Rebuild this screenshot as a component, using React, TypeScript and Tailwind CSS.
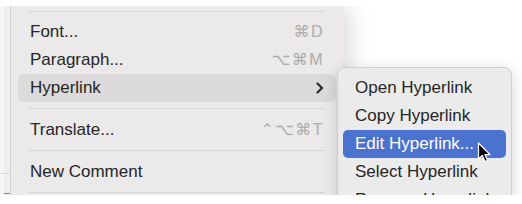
import React from "react";

const font = { fontFamily: '"Liberation Sans", "DejaVu Sans", Arial, sans-serif' };

function Separator() {
  return (
    <div className="pt-[6px] pb-[7px]">
      <div className="mx-[11px] h-px bg-[#d6d4d4]" />
    </div>
  );
}

function Item({
  label,
  shortcut,
  active,
  submenu,
}: {
  label: string;
  shortcut?: string;
  active?: boolean;
  submenu?: boolean;
}) {
  return (
    <div
      className={`flex h-[28px] items-center justify-between rounded-[5px] pl-[12px] pr-[12px] ${
        active ? "bg-[#dcdada]" : ""
      }`}
    >
      <span className="text-[17px] text-[#262626]">{label}</span>
      {shortcut ? (
        <span className="text-[16px] tracking-[1.5px] text-[#adabab]">{shortcut}</span>
      ) : null}
      {submenu ? (
        <svg width="8" height="12" viewBox="0 0 8 12">
          <path d="M1.5 1.5 L6 6 L1.5 10.5" fill="none" stroke="#2a2a2a" strokeWidth="2.2" strokeLinecap="round" strokeLinejoin="round" />
        </svg>
      ) : null}
    </div>
  );
}

function SubItem({ label, active }: { label: string; active?: boolean }) {
  return (
    <div
      className={`flex h-[28px] items-center rounded-[5px] px-[12px] text-[17px] ${
        active ? "bg-[#4b72cf] text-white" : "text-[#262626]"
      }`}
    >
      {label}
    </div>
  );
}

export default function App() {
  return (
    <div className="relative h-[204px] w-[522px] overflow-hidden bg-white" style={font}>
      <div className="h-[6px]" />
      <div className="relative flex h-[189px] overflow-hidden">
        <div className="relative flex w-[11px] shrink-0 border-r border-[#d3d3d3] bg-[#efefef]">
          <div className="w-[4px] bg-[#f6f6f6]" />
          <div className="absolute left-0 top-[167px] h-px w-[10px] bg-[#d8d8d8]" />
          <div className="absolute left-[4px] top-[187px] h-px w-[6px] bg-[#8a8a8a]" />
        </div>
        <div className="w-[332px] shrink-0 bg-[#ebe9e9] px-[7px] shadow-[8px_0_20px_rgba(0,0,0,0.13)]">
          <div className="pt-[5px] pb-[6px]">
            <div className="mx-[11px] h-px bg-[#d6d4d4]" />
          </div>
          <Item label="Font..." shortcut="⌘D" />
          <Item label="Paragraph..." shortcut="⌥⌘M" />
          <Item label="Hyperlink" active submenu />
          <Separator />
          <Item label="Translate..." shortcut="⌃⌥⌘T" />
          <Separator />
          <Item label="New Comment" />
          <Separator />
        </div>

        <div className="absolute left-[337px] top-[61px] w-[175px] rounded-[8px] border border-[#cfcdcd] bg-[#ecebeb] px-[5px] pt-[6px] shadow-[0_4px_16px_rgba(0,0,0,0.16)]">
          <SubItem label="Open Hyperlink" />
          <SubItem label="Copy Hyperlink" />
          <SubItem label="Edit Hyperlink..." active />
          <SubItem label="Select Hyperlink" />
          <SubItem label="Remove Hyperlink" />
        </div>

        <svg
          className="absolute left-[477px] top-[136px]"
          width="16"
          height="22"
          viewBox="0 0 16 22"
        >
          <path
            d="M1.5 1 L1.5 17 L5.3 13.5 L8 19.5 L10.6 18.4 L8 12.6 L13 12.6 Z"
            fill="#000"
            stroke="#fff"
            strokeWidth="1.3"
            strokeLinejoin="round"
          />
        </svg>
      </div>
    </div>
  );
}
